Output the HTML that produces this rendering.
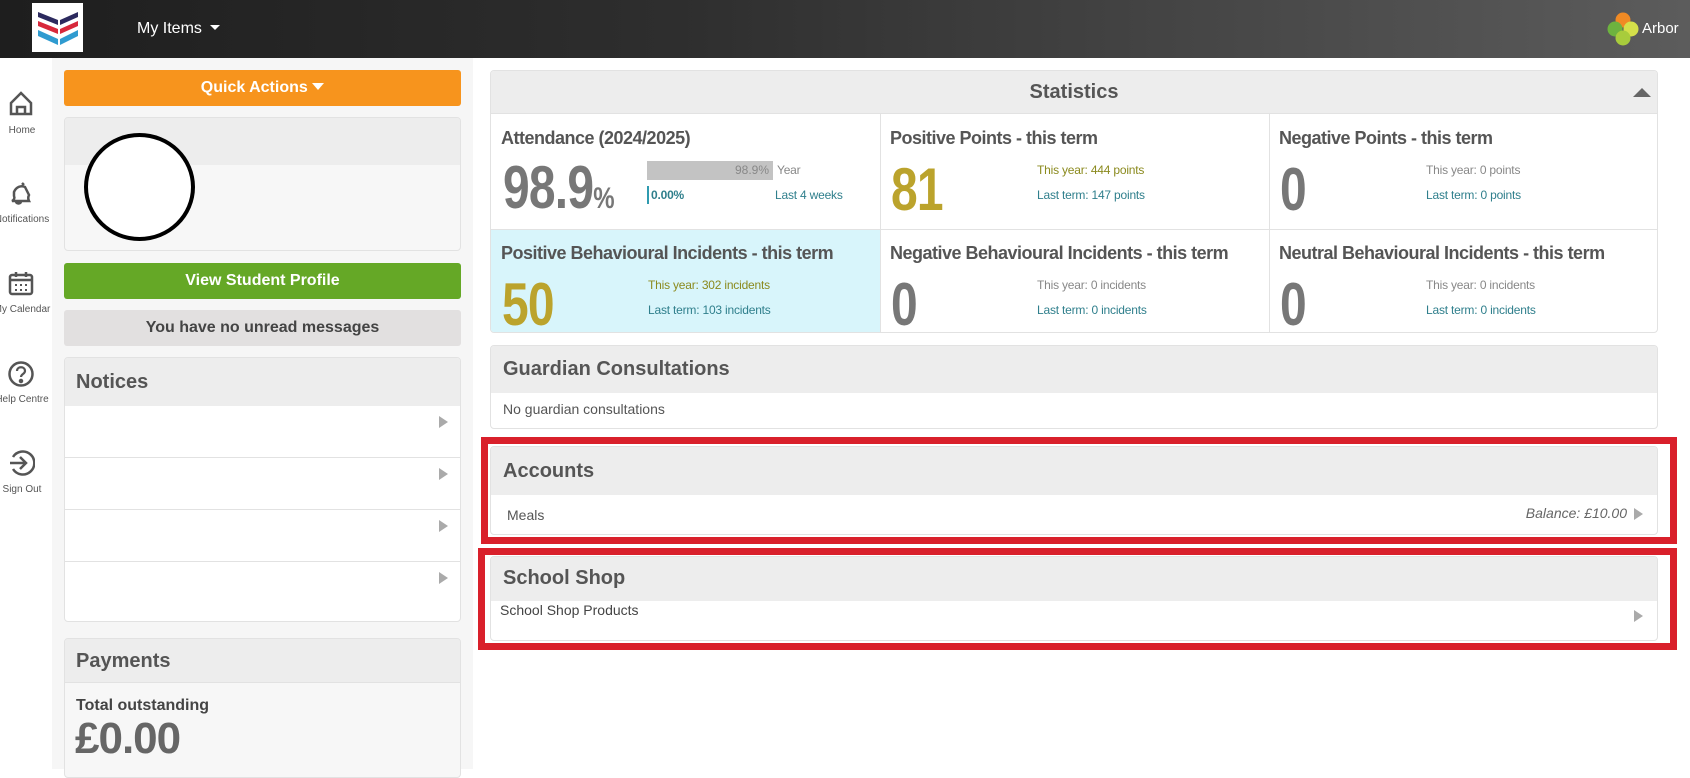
<!DOCTYPE html>
<html><head><meta charset="utf-8"><style>
*{box-sizing:border-box;margin:0;padding:0}
body{width:1690px;height:769px;overflow:hidden;background:#fff;font-family:"Liberation Sans",sans-serif;color:#555;position:relative}
.a{position:absolute}
.hdr{left:0;top:0;width:1690px;height:58px;background:linear-gradient(90deg,#1e1e1e 0%,#2e2e2e 40%,#5c5c5c 100%)}
.col{left:52px;top:58px;width:421px;height:711px;background:#f6f6f6}
.card{background:#fff;border:1px solid #e2e2e2;border-radius:4px}
.ch{background:#ededed}
.side{width:44px;text-align:center;font-size:10px;color:#555;left:0}
.side span{position:absolute;left:-20px;width:84px;text-align:center}
.t{font-weight:bold;font-size:18px;color:#555;letter-spacing:-0.5px}
.big{font-size:60px;font-weight:bold;color:#777;letter-spacing:-1px;line-height:1;transform:scaleX(0.8);transform-origin:left top}
.yl{color:#bba32c}
.sm{font-size:12px;letter-spacing:-0.2px}
.ol{color:#8b8a1e}.tl{color:#2f7f8c}.gr{color:#888}
.arr{width:0;height:0;border-top:6px solid transparent;border-bottom:6px solid transparent;border-left:9px solid #aaa}
.red{border:7px solid #d9202b}
</style></head><body>
<div class="a hdr"></div>
<div class="a" style="left:32px;top:3px;width:51px;height:49px;background:#fff">
<svg width="51" height="49" viewBox="0 0 51 49">
<polygon points="6,9 26,17 26,22 6,14" fill="#2c2a5e"/><polygon points="28,17 46,9 46,14 28,22" fill="#2c2a5e"/>
<polygon points="6,18 26,26 26,31 6,23" fill="#d7283b"/><polygon points="28,26 46,18 46,23 28,31" fill="#d7283b"/>
<polygon points="6,27 26,36 26,42 6,33" fill="#2f9bd0"/><polygon points="28,36 46,27 46,33 28,42" fill="#2f9bd0"/>
</svg></div>
<div class="a" style="left:137px;top:20px;color:#fff;font-size:16px">My Items <span style="display:inline-block;width:0;height:0;border-left:5px solid transparent;border-right:5px solid transparent;border-top:5px solid #fff;vertical-align:3px;margin-left:4px"></span></div>
<svg class="a" style="left:1606px;top:11px" width="34" height="36" viewBox="0 0 34 36"><circle cx="17" cy="9" r="7.5" fill="#f08a24"/><circle cx="9" cy="18" r="7.5" fill="#6db33f"/><circle cx="25" cy="18" r="7.5" fill="#d4e04a"/><circle cx="17" cy="27" r="7.5" fill="#a8cc3c"/></svg>
<div class="a" style="left:1642px;top:20px;color:#fff;font-size:15px">Arbor</div>

<!-- sidebar -->
<svg class="a" style="left:8px;top:90px" width="26" height="28" viewBox="0 0 26 28" fill="none" stroke="#555" stroke-width="2.5"><path d="M3 13 L13 3 L23 13 V24 H3 Z"/><path d="M9 24 V17 H17 V24"/></svg>
<div class="a side" style="top:125px"><span>Home</span></div>
<svg class="a" style="left:8px;top:180px" width="26" height="26" viewBox="0 0 26 26" fill="none" stroke="#555" stroke-width="2.5"><path d="M14 3 l2 2 M6 12 c2-5 7-7 11-5 l4 8 c-1 2-1 4 0 6 L4 21 c2-1 3-3 2-5 Z M8 22 c1 2 4 2 5 0"/></svg>
<div class="a side" style="top:214px"><span>Notifications</span></div>
<svg class="a" style="left:8px;top:270px" width="26" height="26" viewBox="0 0 26 26" fill="none" stroke="#555" stroke-width="2.5"><rect x="2" y="5" width="22" height="19" rx="2"/><path d="M2 10 H24 M8 2 V7 M18 2 V7"/><path d="M7 15h2M12 15h2M17 15h2M7 20h2M12 20h2M17 20h2" stroke-width="2"/></svg>
<div class="a side" style="top:304px"><span>My Calendar</span></div>
<svg class="a" style="left:7px;top:360px" width="28" height="28" viewBox="0 0 28 28" fill="none" stroke="#555" stroke-width="2.5"><circle cx="14" cy="14" r="11.5"/><path d="M10 11 c0-5 8-5 8 0 c0 3-4 3-4 6" stroke-width="2.2"/><circle cx="14" cy="21" r="1" fill="#555"/></svg>
<div class="a side" style="top:394px"><span>Help Centre</span></div>
<svg class="a" style="left:7px;top:449px" width="28" height="28" viewBox="0 0 28 28" fill="none" stroke="#555" stroke-width="2.5"><path d="M6 8 A11.5 11.5 0 1 1 6 20"/><path d="M3 14 H19 M13 8 L19 14 L13 20"/></svg>
<div class="a side" style="top:484px"><span>Sign Out</span></div>

<!-- left column -->
<div class="a col"></div>
<div class="a" style="left:64px;top:70px;width:397px;height:36px;background:#f7941d;border-radius:3px;color:#fff;font-weight:bold;font-size:16px;text-align:center;line-height:36px">Quick Actions <span style="display:inline-block;width:0;height:0;border-left:6px solid transparent;border-right:6px solid transparent;border-top:7px solid #fff;vertical-align:2px"></span></div>
<div class="a card" style="left:64px;top:117px;width:397px;height:134px;background:#f7f7f7;overflow:hidden"><div class="ch" style="height:47px"></div></div>
<div class="a" style="left:84px;top:133px;width:111px;height:108px;border:4px solid #000;border-radius:50%;background:#fff"></div>
<div class="a" style="left:64px;top:263px;width:397px;height:36px;background:#65a826;border-radius:3px;color:#fff;font-weight:bold;font-size:16px;text-align:center;line-height:36px">View Student Profile</div>
<div class="a" style="left:64px;top:310px;width:397px;height:36px;background:#e2e0e0;border-radius:3px;color:#444;font-weight:bold;font-size:16px;text-align:center;line-height:36px">You have no unread messages</div>
<div class="a card" style="left:64px;top:357px;width:397px;height:265px;overflow:hidden">
<div class="ch" style="height:48px;padding:13px 11px;font-size:20px;font-weight:bold;color:#555">Notices</div>
<div style="height:52px;border-bottom:1px solid #e2e2e2;position:relative"><div class="a arr" style="right:12px;top:10px"></div></div>
<div style="height:52px;border-bottom:1px solid #e2e2e2;position:relative"><div class="a arr" style="right:12px;top:10px"></div></div>
<div style="height:52px;border-bottom:1px solid #e2e2e2;position:relative"><div class="a arr" style="right:12px;top:10px"></div></div>
<div style="height:60px;position:relative"><div class="a arr" style="right:12px;top:10px"></div></div>
</div>
<div class="a card" style="left:64px;top:638px;width:397px;height:140px;background:#f7f7f7;overflow:hidden">
<div class="ch" style="height:44px;padding:11px 11px;font-size:20px;font-weight:bold;color:#555;border-bottom:1px solid #e2e2e2">Payments</div>
<div style="padding:14px 11px 0;font-size:16px;font-weight:bold;color:#444">Total outstanding</div>
<div style="padding:0 10px;font-size:44px;font-weight:bold;color:#666;letter-spacing:-1px;line-height:48px">£0.00</div>
</div>

<!-- statistics -->
<div class="a card" style="left:490px;top:70px;width:1168px;height:263px;overflow:hidden">
<div class="ch" style="height:43px;text-align:center;font-size:20px;font-weight:bold;line-height:43px;border-bottom:1px solid #e2e2e2">Statistics</div>
<div class="a" style="left:1142px;top:17px;width:0;height:0;border-left:9px solid transparent;border-right:9px solid transparent;border-bottom:9px solid #666"></div>
<div class="a" style="left:389px;top:43px;width:1px;height:220px;background:#e2e2e2"></div>
<div class="a" style="left:778px;top:43px;width:1px;height:220px;background:#e2e2e2"></div>
<div class="a" style="left:0;top:158px;width:1168px;height:1px;background:#e2e2e2"></div>
<div class="a" style="left:0;top:159px;width:389px;height:104px;background:#d8f5fb"></div>
<!-- row 1 -->
<div class="a t" style="left:10px;top:57px">Attendance (2024/2025)</div>
<div class="a big" style="left:12px;top:87px">98.9<span style="font-size:30px;letter-spacing:0">%</span></div>
<div class="a" style="left:156px;top:90px;width:126px;height:19px;background:#c3c3c3;color:#888;font-size:12px;text-align:right;padding-right:4px;line-height:19px">98.9%</div>
<div class="a sm gr" style="left:286px;top:92px">Year</div>
<div class="a" style="left:156px;top:115px;width:2px;height:18px;background:#2f9bb0"></div>
<div class="a sm tl" style="left:160px;top:117px;font-weight:bold">0.00%</div>
<div class="a sm tl" style="left:284px;top:117px">Last 4 weeks</div>

<div class="a t" style="left:399px;top:57px">Positive Points - this term</div>
<div class="a big yl" style="left:400px;top:89px">81</div>
<div class="a sm ol" style="left:546px;top:92px">This year: 444 points</div>
<div class="a sm tl" style="left:546px;top:117px">Last term: 147 points</div>

<div class="a t" style="left:788px;top:57px">Negative Points - this term</div>
<div class="a big" style="left:789px;top:89px">0</div>
<div class="a sm gr" style="left:935px;top:92px">This year: 0 points</div>
<div class="a sm tl" style="left:935px;top:117px">Last term: 0 points</div>
<!-- row 2 -->
<div class="a t" style="left:10px;top:172px">Positive Behavioural Incidents - this term</div>
<div class="a big yl" style="left:11px;top:204px">50</div>
<div class="a sm ol" style="left:157px;top:207px">This year: 302 incidents</div>
<div class="a sm tl" style="left:157px;top:232px">Last term: 103 incidents</div>

<div class="a t" style="left:399px;top:172px">Negative Behavioural Incidents - this term</div>
<div class="a big" style="left:400px;top:204px">0</div>
<div class="a sm gr" style="left:546px;top:207px">This year: 0 incidents</div>
<div class="a sm tl" style="left:546px;top:232px">Last term: 0 incidents</div>

<div class="a t" style="left:788px;top:172px">Neutral Behavioural Incidents - this term</div>
<div class="a big" style="left:789px;top:204px">0</div>
<div class="a sm gr" style="left:935px;top:207px">This year: 0 incidents</div>
<div class="a sm tl" style="left:935px;top:232px">Last term: 0 incidents</div>
</div>

<!-- guardian -->
<div class="a card" style="left:490px;top:345px;width:1168px;height:84px;overflow:hidden">
<div class="ch" style="height:47px;padding:12px 12px;font-size:20px;font-weight:bold">Guardian Consultations</div>
<div style="padding:8px 12px;font-size:14px;color:#555">No guardian consultations</div>
</div>

<!-- accounts -->
<div class="a red" style="left:481px;top:437px;width:1196px;height:107px"></div>
<div class="a card" style="left:490px;top:446px;width:1168px;height:89px;overflow:hidden">
<div class="ch" style="height:48px;padding:13px 12px;font-size:20px;font-weight:bold">Accounts</div>
<div style="position:relative;height:41px">
<div class="a" style="left:16px;top:12px;font-size:14px;color:#555">Meals</div>
<div class="a" style="right:30px;top:10px;font-size:14px;font-style:italic;color:#666">Balance: £10.00</div>
<div class="a arr" style="right:14px;top:13px"></div>
</div></div>

<!-- shop -->
<div class="a red" style="left:478px;top:548px;width:1199px;height:102px"></div>
<div class="a card" style="left:490px;top:556px;width:1168px;height:85px;overflow:hidden">
<div class="ch" style="height:44px;padding:10px 12px;font-size:20px;font-weight:bold">School Shop</div>
<div style="position:relative;height:41px">
<div class="a" style="left:9px;top:1px;font-size:14px;color:#444">School Shop Products</div>
<div class="a arr" style="right:14px;top:9px"></div>
</div></div>
</body></html>
